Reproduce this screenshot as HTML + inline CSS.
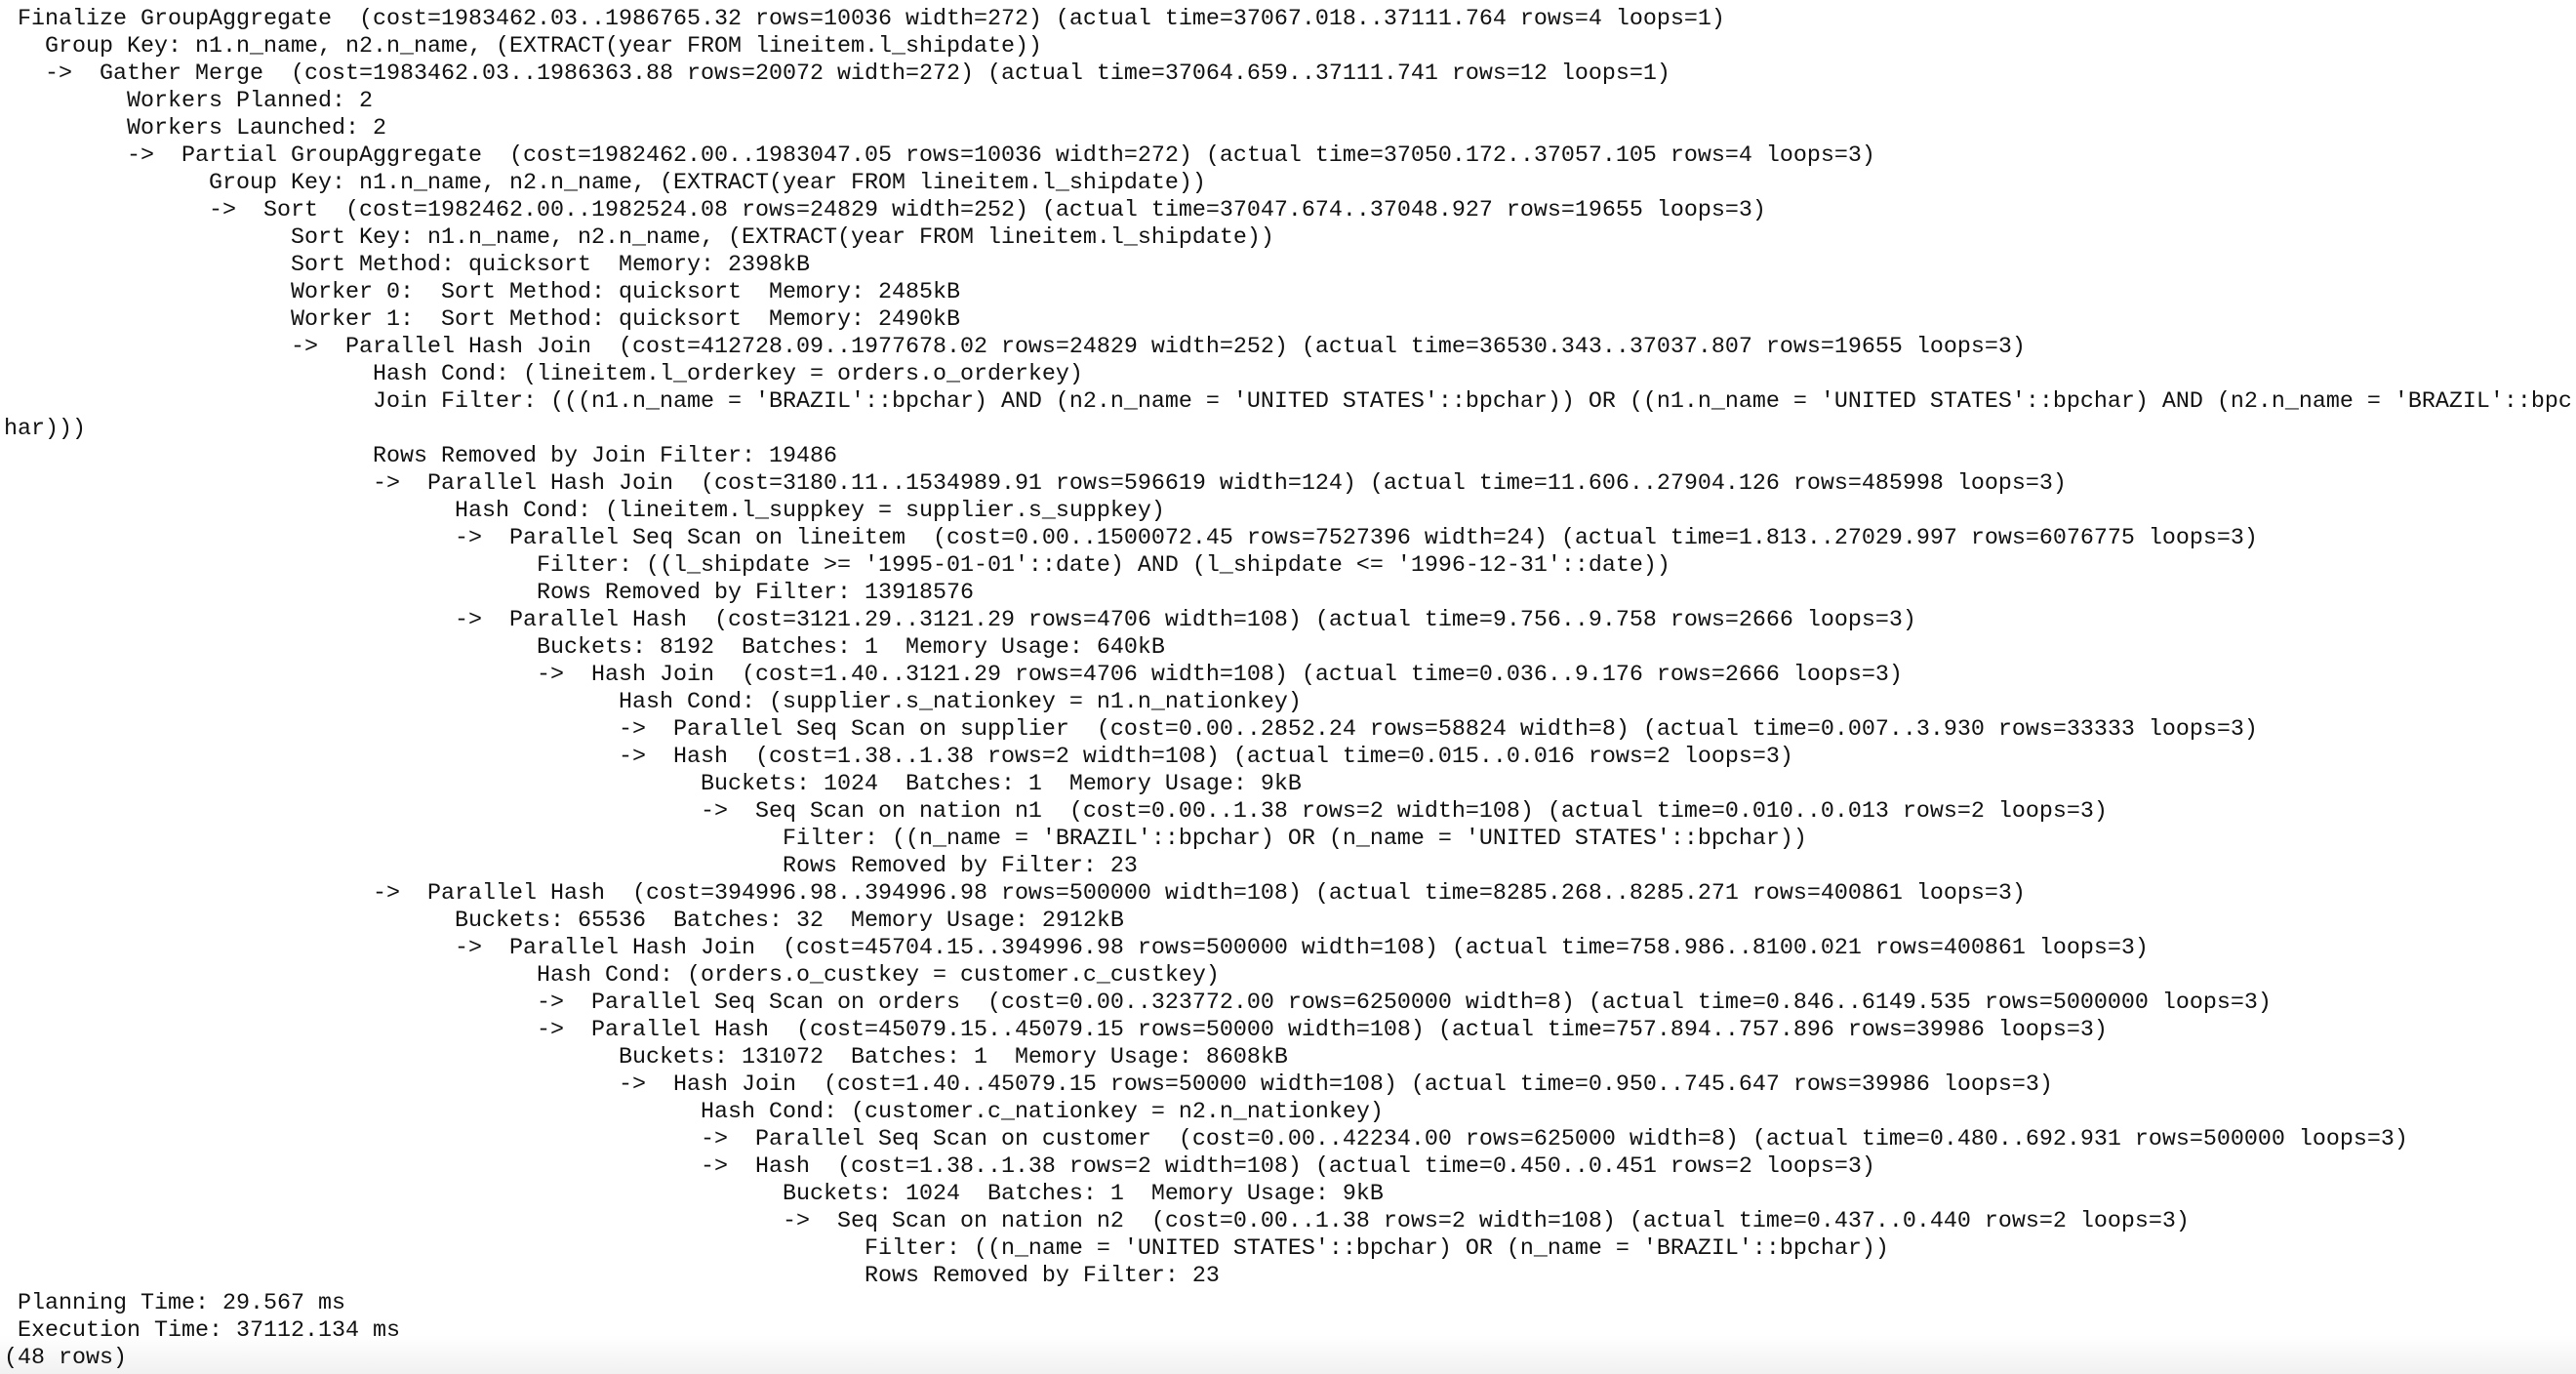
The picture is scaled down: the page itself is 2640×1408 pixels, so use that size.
<!DOCTYPE html>
<html>
<head>
<meta charset="utf-8">
<style>
html,body{margin:0;padding:0;background:#fff;}
body{width:2640px;height:1408px;overflow:hidden;position:relative;}
.fade{position:absolute;left:0;right:0;bottom:0;height:40px;background:linear-gradient(#fff,#f1f1f1);}
pre{position:absolute;left:4px;top:6px;margin:0;font-family:"Liberation Mono",monospace;font-size:23.33px;line-height:28px;color:#111;white-space:pre;}
</style>
</head>
<body>
<div class="fade"></div>
<pre> Finalize GroupAggregate  (cost=1983462.03..1986765.32 rows=10036 width=272) (actual time=37067.018..37111.764 rows=4 loops=1)
   Group Key: n1.n_name, n2.n_name, (EXTRACT(year FROM lineitem.l_shipdate))
   -&gt;  Gather Merge  (cost=1983462.03..1986363.88 rows=20072 width=272) (actual time=37064.659..37111.741 rows=12 loops=1)
         Workers Planned: 2
         Workers Launched: 2
         -&gt;  Partial GroupAggregate  (cost=1982462.00..1983047.05 rows=10036 width=272) (actual time=37050.172..37057.105 rows=4 loops=3)
               Group Key: n1.n_name, n2.n_name, (EXTRACT(year FROM lineitem.l_shipdate))
               -&gt;  Sort  (cost=1982462.00..1982524.08 rows=24829 width=252) (actual time=37047.674..37048.927 rows=19655 loops=3)
                     Sort Key: n1.n_name, n2.n_name, (EXTRACT(year FROM lineitem.l_shipdate))
                     Sort Method: quicksort  Memory: 2398kB
                     Worker 0:  Sort Method: quicksort  Memory: 2485kB
                     Worker 1:  Sort Method: quicksort  Memory: 2490kB
                     -&gt;  Parallel Hash Join  (cost=412728.09..1977678.02 rows=24829 width=252) (actual time=36530.343..37037.807 rows=19655 loops=3)
                           Hash Cond: (lineitem.l_orderkey = orders.o_orderkey)
                           Join Filter: (((n1.n_name = 'BRAZIL'::bpchar) AND (n2.n_name = 'UNITED STATES'::bpchar)) OR ((n1.n_name = 'UNITED STATES'::bpchar) AND (n2.n_name = 'BRAZIL'::bpc
har)))
                           Rows Removed by Join Filter: 19486
                           -&gt;  Parallel Hash Join  (cost=3180.11..1534989.91 rows=596619 width=124) (actual time=11.606..27904.126 rows=485998 loops=3)
                                 Hash Cond: (lineitem.l_suppkey = supplier.s_suppkey)
                                 -&gt;  Parallel Seq Scan on lineitem  (cost=0.00..1500072.45 rows=7527396 width=24) (actual time=1.813..27029.997 rows=6076775 loops=3)
                                       Filter: ((l_shipdate &gt;= '1995-01-01'::date) AND (l_shipdate &lt;= '1996-12-31'::date))
                                       Rows Removed by Filter: 13918576
                                 -&gt;  Parallel Hash  (cost=3121.29..3121.29 rows=4706 width=108) (actual time=9.756..9.758 rows=2666 loops=3)
                                       Buckets: 8192  Batches: 1  Memory Usage: 640kB
                                       -&gt;  Hash Join  (cost=1.40..3121.29 rows=4706 width=108) (actual time=0.036..9.176 rows=2666 loops=3)
                                             Hash Cond: (supplier.s_nationkey = n1.n_nationkey)
                                             -&gt;  Parallel Seq Scan on supplier  (cost=0.00..2852.24 rows=58824 width=8) (actual time=0.007..3.930 rows=33333 loops=3)
                                             -&gt;  Hash  (cost=1.38..1.38 rows=2 width=108) (actual time=0.015..0.016 rows=2 loops=3)
                                                   Buckets: 1024  Batches: 1  Memory Usage: 9kB
                                                   -&gt;  Seq Scan on nation n1  (cost=0.00..1.38 rows=2 width=108) (actual time=0.010..0.013 rows=2 loops=3)
                                                         Filter: ((n_name = 'BRAZIL'::bpchar) OR (n_name = 'UNITED STATES'::bpchar))
                                                         Rows Removed by Filter: 23
                           -&gt;  Parallel Hash  (cost=394996.98..394996.98 rows=500000 width=108) (actual time=8285.268..8285.271 rows=400861 loops=3)
                                 Buckets: 65536  Batches: 32  Memory Usage: 2912kB
                                 -&gt;  Parallel Hash Join  (cost=45704.15..394996.98 rows=500000 width=108) (actual time=758.986..8100.021 rows=400861 loops=3)
                                       Hash Cond: (orders.o_custkey = customer.c_custkey)
                                       -&gt;  Parallel Seq Scan on orders  (cost=0.00..323772.00 rows=6250000 width=8) (actual time=0.846..6149.535 rows=5000000 loops=3)
                                       -&gt;  Parallel Hash  (cost=45079.15..45079.15 rows=50000 width=108) (actual time=757.894..757.896 rows=39986 loops=3)
                                             Buckets: 131072  Batches: 1  Memory Usage: 8608kB
                                             -&gt;  Hash Join  (cost=1.40..45079.15 rows=50000 width=108) (actual time=0.950..745.647 rows=39986 loops=3)
                                                   Hash Cond: (customer.c_nationkey = n2.n_nationkey)
                                                   -&gt;  Parallel Seq Scan on customer  (cost=0.00..42234.00 rows=625000 width=8) (actual time=0.480..692.931 rows=500000 loops=3)
                                                   -&gt;  Hash  (cost=1.38..1.38 rows=2 width=108) (actual time=0.450..0.451 rows=2 loops=3)
                                                         Buckets: 1024  Batches: 1  Memory Usage: 9kB
                                                         -&gt;  Seq Scan on nation n2  (cost=0.00..1.38 rows=2 width=108) (actual time=0.437..0.440 rows=2 loops=3)
                                                               Filter: ((n_name = 'UNITED STATES'::bpchar) OR (n_name = 'BRAZIL'::bpchar))
                                                               Rows Removed by Filter: 23
 Planning Time: 29.567 ms
 Execution Time: 37112.134 ms
(48 rows)</pre>
</body>
</html>
